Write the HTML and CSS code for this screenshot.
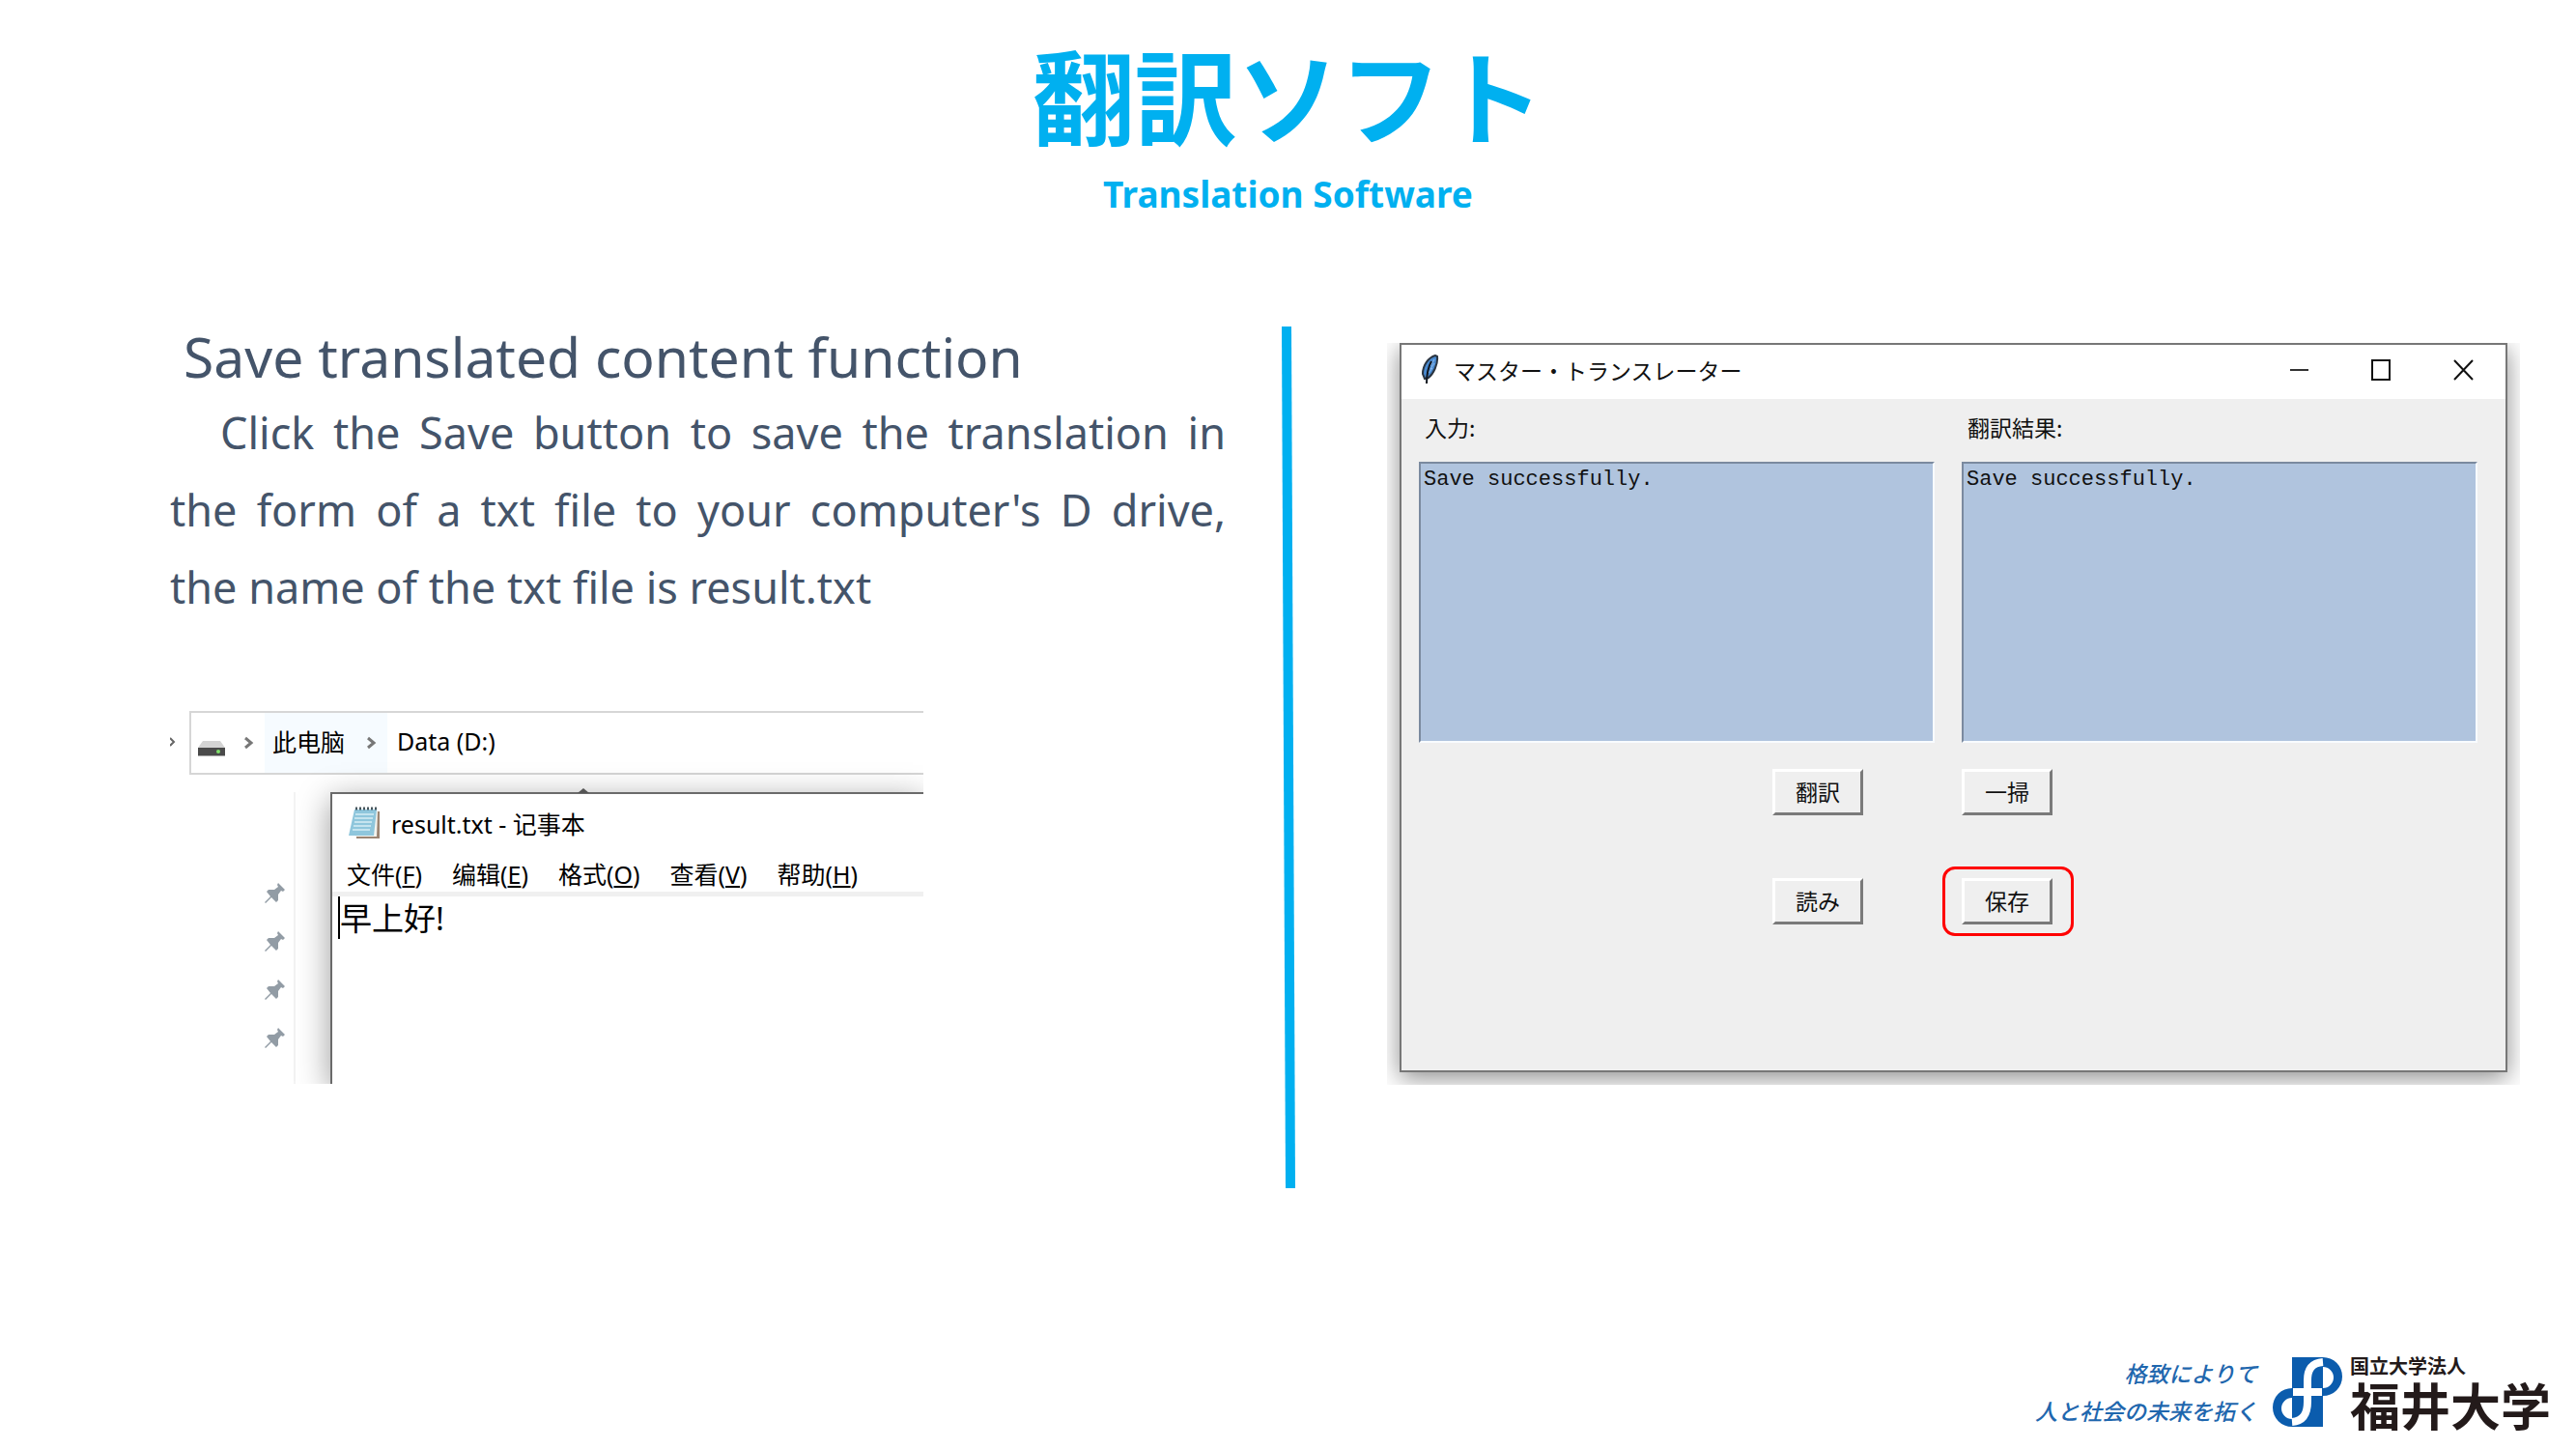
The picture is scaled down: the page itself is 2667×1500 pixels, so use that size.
FILE: index.html
```html
<!DOCTYPE html>
<html lang="ja">
<head>
<meta charset="utf-8">
<meta name="viewport" content="width=device-width, initial-scale=1">
<title>翻訳ソフト</title>
<link rel="stylesheet" href="styles.css">
</head>
<body>
<div class="slide">
  <header class="slide-header">
    <h1 class="title">翻訳ソフト</h1>
    <p class="subtitle">Translation Software</p>
  </header>

  <main class="columns">
    <section class="left">
      <h2 class="heading">Save translated content function</h2>
      <p class="body-text">Click the Save button to save the translation in the form of a txt file to your computer's D drive, the&nbsp;name of the txt file is result.txt</p>

      <div class="explorer" lang="zh-CN">
        <svg class="edge-chevron" width="6" height="12" viewBox="0 0 6 12" aria-hidden="true"><path d="M0 2l4 4-4 4" fill="none" stroke="#666" stroke-width="2"/></svg>
        <nav class="address">
          <svg class="drive" width="30" height="18" viewBox="0 0 30 18" aria-hidden="true">
            <path d="M6 1h18l5 7H1z" fill="#d4d4d4"/>
            <rect x="1" y="8" width="28" height="8" fill="#4a4a4a"/>
            <path d="M1 16h28v1H1z" fill="#aaa"/>
            <circle cx="22" cy="12" r="2" fill="#7fe06a"/>
          </svg>
          <svg class="chevron" width="12" height="16" viewBox="0 0 12 16" aria-hidden="true"><path d="M2 3l6 5-6 5" fill="none" stroke="#777" stroke-width="3"/></svg>
          <span class="crumb-hot"><a class="crumb" href="#pc">此电脑</a>
          <svg class="chevron" width="12" height="16" viewBox="0 0 12 16" aria-hidden="true"><path d="M2 3l6 5-6 5" fill="none" stroke="#777" stroke-width="3"/></svg></span>
          <a class="crumb" href="#d">Data (D:)</a>
        </nav>
        <div class="explorer-body">
          <div class="pins">
            <svg class="pin" viewBox="0 0 22 22" aria-hidden="true"><path d="M14 0l7 7-2 2-2-1-3 4 0 6-2 2-5-5-6 6-1-1 6-6-4-5 2-2 6 0 4-3-1-2z" fill="#929ca5"/></svg>
            <svg class="pin" viewBox="0 0 22 22" aria-hidden="true"><path d="M14 0l7 7-2 2-2-1-3 4 0 6-2 2-5-5-6 6-1-1 6-6-4-5 2-2 6 0 4-3-1-2z" fill="#929ca5"/></svg>
            <svg class="pin" viewBox="0 0 22 22" aria-hidden="true"><path d="M14 0l7 7-2 2-2-1-3 4 0 6-2 2-5-5-6 6-1-1 6-6-4-5 2-2 6 0 4-3-1-2z" fill="#929ca5"/></svg>
            <svg class="pin" viewBox="0 0 22 22" aria-hidden="true"><path d="M14 0l7 7-2 2-2-1-3 4 0 6-2 2-5-5-6 6-1-1 6-6-4-5 2-2 6 0 4-3-1-2z" fill="#929ca5"/></svg>
          </div>
          <div class="notepad">
            <svg class="scroll-tip" width="12" height="5" viewBox="0 0 12 5" aria-hidden="true"><path d="M0 5l6-5 6 5z" fill="#555"/></svg>
            <div class="notepad-title">
              <svg class="notepad-icon" width="32" height="34" viewBox="0 0 32 34" aria-hidden="true">
                <path d="M8 5h24v28H8z" fill="#9b8574"/>
                <path d="M6 4h24l-1 27H7z" fill="#f3f3ee"/>
                <path d="M6 3h23l-3 27H0z" fill="#8fc6dc"/>
                <path d="M7 8h19M6 12h19M6 16h18M5 20h18M4 24h18" stroke="#c5e4ef" stroke-width="2"/>
                <path d="M7 2h22" stroke="#45545c" stroke-width="3" stroke-dasharray="2 2"/>
              </svg>
              <span>result.txt - 记事本</span>
            </div>
            <div class="menu">
              <button type="button">文件(<u>F</u>)</button>
              <button type="button">编辑(<u>E</u>)</button>
              <button type="button">格式(<u>O</u>)</button>
              <button type="button">查看(<u>V</u>)</button>
              <button type="button">帮助(<u>H</u>)</button>
            </div>
            <div class="editor"><span class="caret"></span><textarea class="editor-text" aria-label="result.txt">早上好!</textarea></div>
          </div>
        </div>
      </div>
    </section>

    <svg class="divider" viewBox="0 0 14 892" preserveAspectRatio="none" aria-hidden="true"><path d="M0 0h10l4 892H4z" fill="#00b0f0"/></svg>

    <section class="right">
      <div class="window">
        <div class="window-bar">
          <svg class="feather" width="20" height="32" viewBox="0 0 20 32" aria-hidden="true">
            <path d="M15 1C8 3 2 11 2 20l2 5 4-1C13 20 18 10 17 2z" fill="#4a8ad0" stroke="#2a3440" stroke-width="2"/>
            <path d="M14 5l-4 7M14 9l-4 6M12 14l-4 5" stroke="#8fbdf0" stroke-width="1"/>
            <path d="M11 7C7 14 6 20 6 30" fill="none" stroke="#10161f" stroke-width="2"/>
          </svg>
          <span class="window-title">マスター・トランスレーター</span>
          <div class="controls">
            <button type="button" aria-label="最小化"><svg width="22" height="22" viewBox="0 0 22 22"><path d="M1 11h19" stroke="#333" stroke-width="2"/></svg></button>
            <button type="button" aria-label="最大化"><svg width="22" height="22" viewBox="0 0 22 22"><path d="M1 1h18v20H1z" fill="none" stroke="#111" stroke-width="2"/></svg></button>
            <button type="button" aria-label="閉じる"><svg width="22" height="22" viewBox="0 0 22 22"><path d="M1 1l19 20M20 1L1 21" stroke="#111" stroke-width="2"/></svg></button>
          </div>
        </div>
        <div class="form">
          <div class="field">
            <label for="source">入力:</label>
            <textarea id="source">Save successfully.</textarea>
          </div>
          <div class="field">
            <label for="result">翻訳結果:</label>
            <textarea id="result">Save successfully.</textarea>
          </div>
          <div class="actions actions-left">
            <button type="button" class="tk-button">翻訳</button>
            <button type="button" class="tk-button">読み</button>
          </div>
          <div class="actions">
            <button type="button" class="tk-button">一掃</button>
            <button type="button" class="tk-button marked">保存</button>
          </div>
        </div>
      </div>
    </section>
  </main>

  <footer class="brand">
    <p class="slogan">格致によりて<br>人と社会の未来を拓く</p>
    <svg class="mark" width="72" height="74" viewBox="0 0 72 74" aria-hidden="true">
      <rect x="20" y="1" width="32" height="72" fill="#0b5cad"/>
      <path d="M52 1a20 20 0 0 1 0 40v-8a11 11 0 0 0 0-22z" fill="#0b5cad"/>
      <path d="M20 33a20 20 0 0 0 0 40v-8a11 11 0 0 1 0-22z" fill="#0b5cad"/>
      <path d="M52 6C40 7 36 14 36 25v22c0 12-4 20-16 21" fill="none" stroke="#fff" stroke-width="8"/>
      <path d="M21 37h30" stroke="#fff" stroke-width="8"/>
    </svg>
    <p class="school"><span class="school-kind">国立大学法人</span><span class="school-name">福井大学</span></p>
  </footer>
</div>
</body>
</html>
```
FILE: styles.css
```css
* {
  box-sizing: border-box;
}

body {
  margin: 0;
  background: #fff;
  font-family: "Noto Sans", "Noto Sans CJK JP", sans-serif;
}

h1, h2, p {
  margin: 0;
}

button, textarea {
  font: inherit;
  color: inherit;
}

.slide {
  display: flex;
  flex-direction: column;
  min-height: 100vh;
}

/* Title */
.slide-header {
  padding-top: 34px;
  text-align: center;
  color: #00b0f0;
  font-weight: 700;
}

.title {
  font-family: "Noto Sans CJK JP", sans-serif;
  font-size: 106px;
  line-height: 124px;
}

.subtitle {
  font-size: 37px;
  line-height: 86px;
}

/* Two columns around the divider */
.columns {
  display: grid;
  grid-template-columns: 1093fr 72px 1268fr;
  padding: 94px 58px 0 176px;
}

.left {
  min-width: 0;
  color: #44546a;
}

.heading {
  margin-bottom: 8px;
  padding-left: 14px;
  font-size: 57px;
  font-weight: 400;
  line-height: 62px;
}

.body-text {
  font-size: 45px;
  line-height: 80px;
  text-align: justify;
  text-indent: 52px;
}

.divider {
  width: 14px;
  height: 892px;
  margin-left: 58px;
}

/* Explorer window */
.explorer {
  position: relative;
  width: 780px;
  max-width: 100%;
  height: 386px;
  margin-top: 88px;
  padding-left: 20px;
  overflow: hidden;
  color: #000;
  font-family: "Noto Sans", "Noto Sans CJK SC", sans-serif;
  font-size: 25px;
}

.edge-chevron {
  position: absolute;
  left: 0;
  top: 26px;
}

.address {
  display: flex;
  align-items: center;
  height: 66px;
  padding-left: 6px;
  border: 2px solid #d6d6d6;
  border-right: 0;
}

.drive {
  margin-top: 12px;
}

.address > .chevron {
  margin: 0 10px 0 18px;
}

.crumb {
  padding-bottom: 4px;
  color: inherit;
  text-decoration: none;
}

.crumb-hot {
  display: flex;
  align-items: center;
  gap: 22px;
  height: 100%;
  margin-right: 10px;
  padding: 0 10px 0 8px;
  background: #f6fbff;
}

.explorer-body {
  display: flex;
  height: 320px;
  padding-top: 18px;
}

.pins {
  display: flex;
  flex-direction: column;
  gap: 28px;
  width: 110px;
  padding: 94px 0 0 78px;
  border-right: 2px solid #f3f3f3;
}

.pin {
  width: 22px;
  height: 22px;
}

.notepad {
  position: relative;
  flex: 1;
  margin-left: 36px;
  background: #fff;
  border: 2px solid #6a6a6a;
  border-width: 2px 0 0 2px;
  box-shadow: 0 8px 32px rgba(0, 0, 0, .4);
}

.scroll-tip {
  position: absolute;
  left: 254px;
  top: -6px;
}

.notepad-title {
  display: flex;
  align-items: center;
  gap: 12px;
  height: 64px;
  padding: 0 0 4px 17px;
}

.menu {
  display: flex;
  gap: 31px;
  height: 42px;
  padding-left: 15px;
  border-bottom: 5px solid #f0f0f0;
}

.menu button {
  padding: 0;
  border: 0;
  background: none;
  line-height: 36px;
}

.editor {
  display: flex;
  height: 190px;
  padding-left: 6px;
}

.caret {
  width: 2px;
  height: 44px;
  background: #000;
}

.editor-text {
  flex: 1;
  height: 100%;
  padding: 0;
  border: 0;
  background: none;
  outline: 0;
  resize: none;
  font-size: 33px;
  line-height: 46px;
}

/* Translator window */
.right {
  align-self: start;
  margin-top: 17px;
  margin-left: 95px;
  padding: 0 13px 13px;
  overflow: hidden;
}

.window {
  height: 755px;
  border: 2px solid #777;
  background: #efefef;
  box-shadow: 0 6px 24px rgba(0, 0, 0, .45);
  color: #111;
  font-family: "Noto Sans CJK JP", sans-serif;
  font-size: 23px;
}

.window-bar {
  display: flex;
  align-items: center;
  height: 56px;
  padding: 0 32px 4px 20px;
  background: #fff;
}

.window-title {
  margin-left: 14px;
}

.controls {
  display: flex;
  gap: 63px;
  margin-left: auto;
}

.controls button {
  display: flex;
  padding: 0;
  border: 0;
  background: none;
}

.form {
  display: grid;
  grid-template-columns: 1fr 1fr;
  column-gap: 28px;
  padding: 14px 29px 0 18px;
}

.field label {
  display: block;
  padding-left: 6px;
  line-height: 30px;
}

.field textarea {
  display: block;
  width: 100%;
  height: 291px;
  margin-top: 21px;
  padding: 3px;
  border: 2px solid;
  border-color: #7b8a9f #f8fbff #f8fbff #7b8a9f;
  background: #b0c4de;
  outline: 0;
  resize: none;
  font-family: "Liberation Mono", monospace;
  font-size: 22px;
  line-height: 28px;
}

.actions {
  display: flex;
  flex-direction: column;
  align-items: flex-start;
  gap: 65px;
  padding-top: 27px;
}

.actions-left {
  align-items: flex-end;
  padding-right: 74px;
}

.tk-button {
  width: 94px;
  height: 48px;
  padding: 0 0 3px;
  border: 3px solid;
  border-color: #fff #7a7a7a #7a7a7a #fff;
  background: #efefef;
  line-height: 36px;
}

.marked {
  position: relative;
}

.marked::after {
  content: "";
  position: absolute;
  inset: -15px -25px -15px -23px;
  border: 3px solid #f00;
  border-radius: 13px;
}

/* University logo */
.brand {
  display: flex;
  justify-content: flex-end;
  margin-top: auto;
  padding: 0 26px 18px 0;
  font-family: "Noto Sans CJK JP", sans-serif;
}

.slogan {
  margin-right: 16px;
  color: #1f67ae;
  font-size: 23px;
  font-style: italic;
  font-weight: 500;
  line-height: 39px;
  text-align: right;
}

.mark {
  margin-top: 2px;
}

.school {
  display: flex;
  flex-direction: column;
  margin-left: 8px;
  color: #231a1a;
  font-weight: 700;
}

.school-kind {
  font-size: 20px;
  line-height: 24px;
}

.school-name {
  font-size: 52px;
  line-height: 56px;
}
```
